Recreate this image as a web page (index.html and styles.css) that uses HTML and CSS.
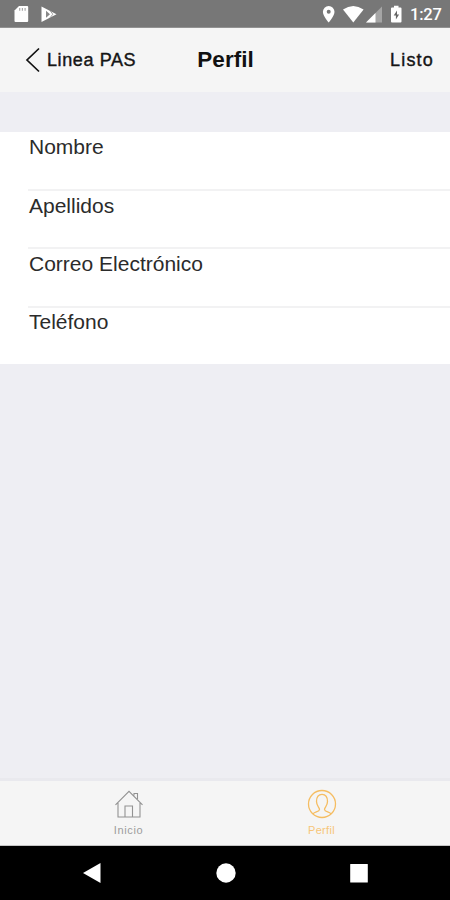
FILE: index.html
```html
<!DOCTYPE html>
<html lang="es">
<head>
<meta charset="utf-8">
<title>Perfil</title>
<link rel="stylesheet" href="styles.css">
</head>
<body>
<div class="status">
  <svg class="left-icons" width="58" height="28" viewBox="0 0 58 28">
    <path d="M19 6h8.200q1 0 1 1v14q0 1-1 1H15.500q-1 0-1-1V10.500z" fill="#fff"/>
    <path d="M19.700 8v2.800M22.400 8v2.800M25.100 8v2.800" stroke="#aaa" stroke-width="1.200"/>
    <path d="M41.500 6.500l15 7.700-15 7.700z" fill="#fff"/>
    <path d="M46 10.800l4 3.400-4 3.600z" fill="#888"/>
    <path d="M50 10.500l2.800 3.700-2.800 3.700" stroke="#999" stroke-width=".9" fill="none"/>
  </svg>
  <svg class="right-icons" width="86" height="28" viewBox="320 0 86 28">
    <path fill-rule="evenodd" d="M328.700 6a5.800 5.800 0 0 0-5.800 5.800c0 4.300 5.800 10.700 5.800 10.700s5.800-6.400 5.800-10.700a5.800 5.800 0 0 0-5.800-5.800zm0 3.800a2 2 0 1 1 0 4 2 2 0 0 1 0-4z" fill="#fff"/>
    <path d="M343 9.500q10.300-7 20.600 0L353.300 22.500z" fill="#fff"/>
    <path d="M382 6.500V22.500H366z" fill="#a5a5a5"/>
    <path d="M375.500 13v9.500H366z" fill="#fff"/>
    <path d="M394 5.800h4.500v1.700h2q1 0 1 1v13q0 1-1 1H392q-1 0-1-1v-13q0-1 1-1h2z" fill="#fff"/>
    <path d="M397 10.500l-3.300 5h2.200v4l3.200-5h-2.100z" fill="#666"/>
  </svg>
  <span class="clock">1:27</span>
</div>
<header class="header">
  <div class="back">
    <svg width="16" height="26" viewBox="0 0 16 26"><path d="M14 1.500L2 13l12 11.500" fill="none" stroke="#111" stroke-width="1.700"/></svg>
    <span>Linea PAS</span>
  </div>
  <h1>Perfil</h1>
  <span class="done">Listo</span>
</header>
<main class="content">
  <ul class="fields">
    <li>Nombre</li>
    <li>Apellidos</li>
    <li>Correo Electrónico</li>
    <li>Teléfono</li>
  </ul>
</main>
<nav class="tabs">
  <div class="tab">
    <svg width="30" height="30" viewBox="0 0 30 30" fill="none" stroke="#929292" stroke-width="1.100">
      <path d="M1.500 15.800L15 2.300l13.500 13.500M4 14v14h22V14M11 28V17h7.500v11M20 6.500V4.500h3.500V10"/>
    </svg>
    <span>Inicio</span>
  </div>
  <div class="tab active">
    <svg width="30" height="30" viewBox="0 0 30 30" fill="none" stroke="#f5bd62" stroke-width="1.300">
      <circle cx="15" cy="15" r="13.500"/>
      <path d="M6 25c1-2.500 6.300-1.800 6.500-4.500.1-2-3-3.500-3-8 0-4.700 2-7.200 5.500-7.200s5.500 2.500 5.500 7.200c0 4.500-3.100 6-3 8 .2 2.700 5.500 2 6.500 4.500"/>
    </svg>
    <span>Perfil</span>
  </div>
</nav>
<div class="system-nav">
  <svg width="20" height="22" viewBox="0 0 20 22"><path d="M1 11L18.500 1v20z" fill="#fff"/></svg>
  <svg width="20" height="22" viewBox="0 0 20 22"><circle cx="10" cy="11" r="9.700" fill="#fff"/></svg>
  <svg width="20" height="22" viewBox="0 0 20 22"><rect x="1.200" y="2" width="17.600" height="18.500" rx=".5" fill="#fff"/></svg>
</div>
</body>
</html>
```

FILE: styles.css
```css
* { box-sizing: border-box; }
body {
  margin: 0;
  width: 450px;
  height: 900px;
  overflow: hidden;
  display: flex;
  flex-direction: column;
  background: #eeeef3;
  color: #151515;
  font-family: "Liberation Sans", Arial, sans-serif;
}
.status {
  height: 28px;
  flex: none;
  display: flex;
  align-items: center;
  background: #777;
  border-bottom: 1px solid #929292;
}
.status svg { display: block; flex: none; margin-bottom: -1px; }
.right-icons { margin-left: 262px; }
.clock {
  margin-left: 4px;
  padding-top: 2px;
  color: #fff;
  font: 500 16.5px/24px Roboto, sans-serif;
  letter-spacing: -.2px;
  white-space: nowrap;
}
.header {
  height: 64px;
  flex: none;
  display: grid;
  grid-template-columns: 1fr auto 1fr;
  align-items: center;
  padding: 0 16px 0 25px;
  background: #f5f5f5;
}
.back { display: flex; align-items: center; gap: 6px; }
.back svg { flex: none; }
.back span, .done {
  font-size: 18px;
  line-height: 24px;
  letter-spacing: .6px;
  white-space: nowrap;
  -webkit-text-stroke: .4px #151515;
}
.done { justify-self: end; letter-spacing: 1.200px; }
.header h1 {
  margin: 0 8px 0 0;
  font-size: 22.500px;
  line-height: 28px;
  color: #111;
}
.content { flex: 1; padding-top: 40px; }
.fields {
  list-style: none;
  margin: 0;
  padding: 0 0 0 28px;
  height: 232px;
  background: #fff;
  display: grid;
  grid-template-rows: 59px 58px 59px 56px;
}
.fields li {
  padding: 3px 0 0 1px;
  border-bottom: 2px solid #f2f2f3;
  font-size: 21px;
  line-height: 24px;
  color: #2b2b2b;
}
.fields li:last-child { border-bottom: 0; padding-top: 2px; }
.tabs {
  height: 68px;
  flex: none;
  display: grid;
  grid-template-columns: 193px 193px;
  justify-content: center;
  background: #f5f5f5;
  border-top: 3px solid #e9e9ee;
  border-bottom: 1px solid #c5c5c5;
}
.tab {
  display: flex;
  flex-direction: column;
  align-items: center;
  padding-top: 8px;
  color: #9c9c9c;
}
.tab svg { display: block; }
.tab span { margin-top: 4px; font-size: 11px; line-height: 14px; letter-spacing: .6px; }
.tab.active { color: #f7c679; }
.tab.active span { letter-spacing: .3px; }
.system-nav {
  height: 54px;
  flex: none;
  display: flex;
  align-items: center;
  justify-content: space-between;
  padding: 0 81px 0 82px;
  background: #000;
}
```
